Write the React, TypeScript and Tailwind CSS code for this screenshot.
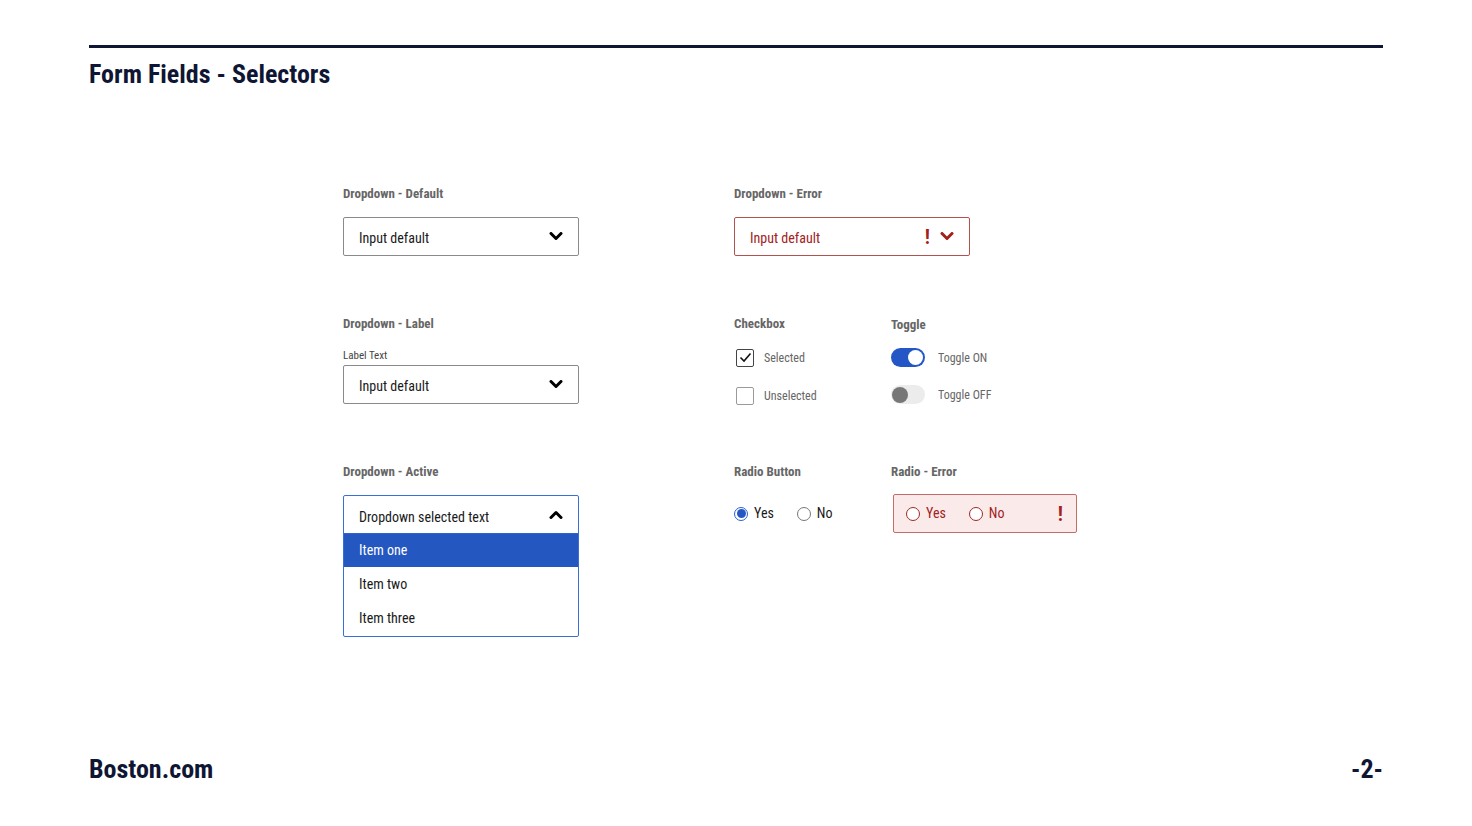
import React from "react";

const font = "font-['Roboto_Condensed','Roboto',sans-serif]";

function Chevron({ up = false, className = "" }: { up?: boolean; className?: string }) {
  return (
    <svg width="14" height="9" viewBox="0 0 14 9" className={className} aria-hidden="true">
      <path
        d={up ? "M2 7.5 L7 2.5 L12 7.5" : "M2 1.5 L7 6.5 L12 1.5"}
        fill="none"
        stroke="currentColor"
        strokeWidth="3"
        strokeLinecap="round"
        strokeLinejoin="round"
      />
    </svg>
  );
}

function Heading({ children }: { children: React.ReactNode }) {
  return <h3 className="text-[13px] font-bold leading-4 text-[#666]">{children}</h3>;
}

function Select({ text, error = false }: { text: string; error?: boolean }) {
  return (
    <div
      className={`flex h-[39px] w-[236px] items-center justify-between rounded-[2px] border pl-[15px] pr-[15px] ${
        error ? "border-[#b3514f] text-[#a3211c]" : "border-[#8a8a8a] text-[#1a1a1a]"
      }`}
    >
      <span className="pt-[4px] text-[14px]">{text}</span>
      <div className="flex items-center gap-[10px]">
        {error && <span className="text-[20px] font-bold leading-none">!</span>}
        <Chevron className={error ? "text-[#a3211c]" : "text-black"} />
      </div>
    </div>
  );
}

function Radio({ checked = false, error = false }: { checked?: boolean; error?: boolean }) {
  if (checked) {
    return (
      <span className="flex h-[14px] w-[14px] items-center justify-center rounded-full border-[1.5px] border-[#2b5fd0] bg-white">
        <span className="h-[9px] w-[9px] rounded-full bg-[#2457c5]" />
      </span>
    );
  }
  return (
    <span
      className={`h-[14px] w-[14px] rounded-full border ${error ? "border-[#9c2a25] bg-white" : "border-[#777] bg-white"}`}
    />
  );
}

export default function App() {
  return (
    <div className={`flex h-[826px] flex-col bg-white px-[89px] pt-[45px] ${font}`}>
      <div className="h-[3px] w-full bg-[#0f1634]" />
      <h1 className="mt-[11px] text-[26px] font-bold leading-[30px] text-[#0f1634]">Form Fields - Selectors</h1>

      <main className="ml-[254px] mt-[97px] grid grid-cols-[236px_auto] gap-x-[155px]">
        {/* row 1 */}
        <section className="h-[130px]">
          <Heading>Dropdown - Default</Heading>
          <div className="mt-[15px]">
            <Select text="Input default" />
          </div>
        </section>
        <section className="h-[130px]">
          <Heading>Dropdown - Error</Heading>
          <div className="mt-[15px]">
            <Select text="Input default" error />
          </div>
        </section>

        {/* row 2 */}
        <section className="h-[148px]">
          <Heading>Dropdown - Label</Heading>
          <p className="mt-[18px] text-[11px] leading-3 text-[#444]">Label Text</p>
          <div className="mt-[3px]">
            <Select text="Input default" />
          </div>
        </section>
        <section className="flex h-[148px]">
          <div className="w-[157px]">
            <Heading>Checkbox</Heading>
            <div className="mt-[16px] flex flex-col gap-[19px] pl-[2px]">
              <label className="flex items-center gap-[10px]">
                <span className="flex h-[18px] w-[18px] items-center justify-center rounded-[2px] border border-[#444]">
                  <svg width="13" height="11" viewBox="0 0 13 11" aria-hidden="true">
                    <path d="M1.5 5.5 L5 9 L11.5 1.5" fill="none" stroke="#111" strokeWidth="1.6" />
                  </svg>
                </span>
                <span className="pt-[1px] text-[12px] text-[#666]">Selected</span>
              </label>
              <label className="flex items-center gap-[10px]">
                <span className="h-[18px] w-[18px] rounded-[2px] border border-[#9a9a9a]" />
                <span className="pt-[1px] text-[12px] text-[#666]">Unselected</span>
              </label>
            </div>
          </div>
          <div className="pt-[1px]">
            <Heading>Toggle</Heading>
            <div className="mt-[15px] flex flex-col gap-[18px]">
              <div className="flex items-center gap-[13px]">
                <span className="flex h-[19px] w-[34px] items-center justify-end rounded-full bg-[#2457c5] px-[2px]">
                  <span className="h-[15px] w-[15px] rounded-full bg-white" />
                </span>
                <span className="pt-[1px] text-[12px] text-[#666]">Toggle ON</span>
              </div>
              <div className="flex items-center gap-[13px]">
                <span className="flex h-[19px] w-[34px] items-center rounded-full bg-[#ececec] px-[1px]">
                  <span className="h-[16px] w-[16px] rounded-full bg-[#777]" />
                </span>
                <span className="pt-[1px] text-[12px] text-[#666]">Toggle OFF</span>
              </div>
            </div>
          </div>
        </section>

        {/* row 3 */}
        <section>
          <Heading>Dropdown - Active</Heading>
          <div className="mt-[15px] w-[236px] overflow-hidden rounded-[2px] border border-[#3a6fd8]">
            <div className="flex h-[38px] items-center justify-between border-b border-[#2f63cf] pl-[15px] pr-[15px] text-[#1a1a1a]">
              <span className="pt-[6px] text-[14px]">Dropdown selected text</span>
              <Chevron up className="text-black" />
            </div>
            <div className="flex h-[33px] items-center bg-[#2457c0] pl-[15px] text-[14px] text-white">Item one</div>
            <div className="flex h-[34px] items-center pl-[15px] text-[14px] text-[#1a1a1a]">Item two</div>
            <div className="flex h-[35px] items-center pl-[15px] text-[14px] text-[#1a1a1a]">Item three</div>
          </div>
        </section>
        <section className="flex">
          <div className="w-[157px]">
            <Heading>Radio Button</Heading>
            <div className="mt-[23px] flex items-center text-[14px] text-[#1a1a1a]">
              <label className="flex items-center gap-[6px]">
                <Radio checked />
                <span>Yes</span>
              </label>
              <label className="ml-[23px] flex items-center gap-[6px]">
                <Radio />
                <span>No</span>
              </label>
            </div>
          </div>
          <div>
            <Heading>Radio - Error</Heading>
            <div className="ml-[2px] mt-[14px] flex h-[39px] w-[184px] items-center rounded-[2px] border border-[#c76a68] bg-[#fbeaea] pl-[12px] pr-[13px] text-[14px] text-[#a3211c]">
              <label className="flex items-center gap-[6px]">
                <Radio error />
                <span>Yes</span>
              </label>
              <label className="ml-[23px] flex items-center gap-[6px]">
                <Radio error />
                <span>No</span>
              </label>
              <span className="ml-auto text-[20px] font-bold leading-none">!</span>
            </div>
          </div>
        </section>
      </main>

      <footer className="mt-auto flex items-end justify-between pb-[43px] text-[26px] font-bold leading-[28px] text-[#0f1634]">
        <span>Boston.com</span>
        <span>-2-</span>
      </footer>
    </div>
  );
}
